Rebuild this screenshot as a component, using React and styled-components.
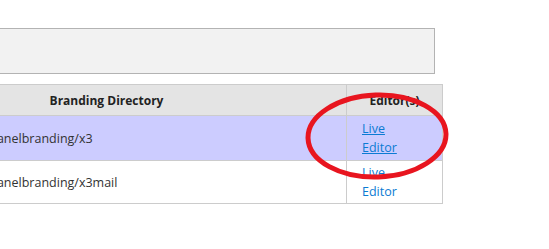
import React from "react"
import styled, { createGlobalStyle } from "styled-components"

const rows = [
  { dir: "/home/demo/cpanelbranding/x3", active: true },
  { dir: "/home/demo/cpanelbranding/x3mail", active: false },
]

const App = () => {
  return (
    <>
      <GlobalStyle />
      <Page>
        <SearchBox />
        <Table>
          <thead>
            <tr>
              <HeadCell>Branding Directory</HeadCell>
              <HeadCell>Editor(s)</HeadCell>
            </tr>
          </thead>
          <tbody>
            {rows.map((r) => (
              <Row key={r.dir} active={r.active}>
                <DirCell>{r.dir}</DirCell>
                <EditorCell>
                  <EditorLink href="#" active={r.active}>Live<br />Editor</EditorLink>
                </EditorCell>
              </Row>
            ))}
          </tbody>
        </Table>
        <Circle width="144" height="88" viewBox="0 0 144 88">
          <ellipse cx="72" cy="44" rx="69" ry="41" fill="none" stroke="#e8151f" strokeWidth="5" transform="rotate(-2 72 44)" />
        </Circle>
      </Page>
    </>
  )
}
export default App

const GlobalStyle = createGlobalStyle`
html, body {
    margin: 0;
    padding: 0;
    background: #fff;
    overflow: hidden;
}
body {
    font-family: "Open Sans", "DejaVu Sans", sans-serif;
    font-size: 12px;
    color: #333;
}
`
const Page = styled.div`
position: relative;
width: 549px;
height: 249px;
padding-top: 28px;
box-sizing: border-box;
display: flex;
flex-direction: column;
`
const SearchBox = styled.div`
margin-left: -100px;
width: 535px;
height: 46px;
box-sizing: border-box;
background: #f2f2f2;
border: 1px solid #b3b3b3;
`
const Table = styled.table`
margin-top: 10px;
margin-left: -134px;
width: 577px;
border-collapse: collapse;
table-layout: fixed;
`
const HeadCell = styled.th`
height: 30px;
padding: 0;
background: #e4e4e4;
border: 1px solid #cccccc;
font-weight: bold;
font-size: 12px;
color: #222;
text-align: center;
&:first-child{
    width: 479px;
}
`
const Row = styled.tr`
background: ${({active})=>active? "#ccccff" : "#ffffff"};
& > td{
    height: ${({active})=>active? "44px" : "42px"};
}
`
const DirCell = styled.td`
padding: 0 0 0 35px;
border: 1px solid #cccccc;
font-size: 12.5px;
color: #333;
white-space: nowrap;
`
const EditorCell = styled.td`
padding: 0 0 0 15px;
border: 1px solid #cccccc;
vertical-align: middle;
`
const EditorLink = styled.a`
color: #0b7bd3;
font-size: 12.5px;
line-height: 19px;
text-decoration: ${({active})=>active? "underline" : "none"};
`
const Circle = styled.svg`
position: absolute;
left: 305px;
top: 92px;
`
